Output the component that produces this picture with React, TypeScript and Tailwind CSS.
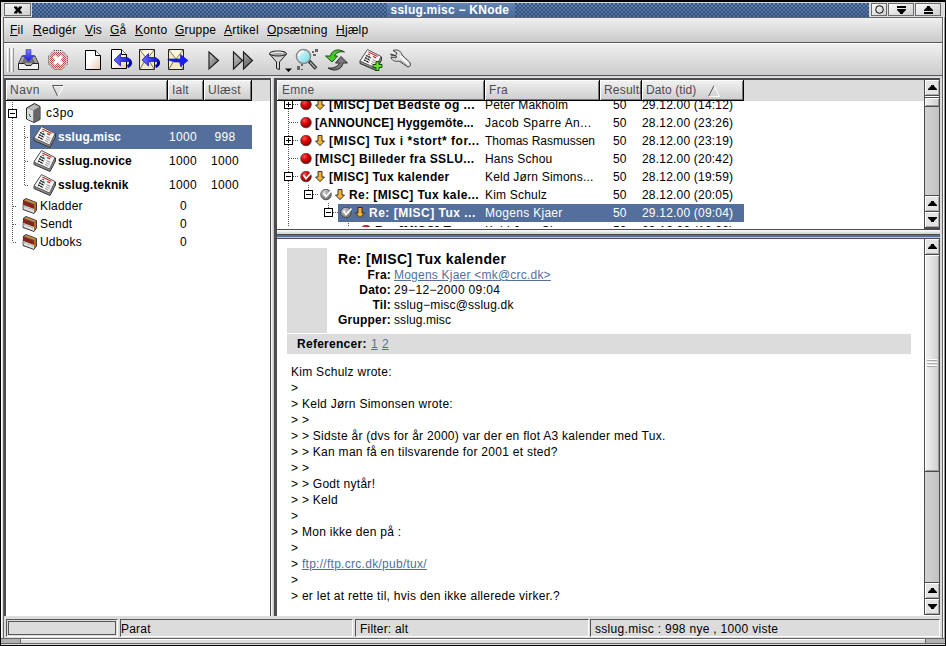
import type { ReactNode } from "react";

const menus: [string, string][] = [
  ["Fil", "w-[23px]"],
  ["Redigér", "w-[52px]"],
  ["Vis", "w-[25px]"],
  ["Gå", "w-[25px]"],
  ["Konto", "w-[40px]"],
  ["Gruppe", "w-[49px]"],
  ["Artikel", "w-[43px]"],
  ["Opsætning", "w-[69px]"],
  ["Hjælp", "w-[40px]"],
];

function Icon({ children, className = "" }: { children: ReactNode; className?: string }) {
  return (
    <svg viewBox="0 0 24 24" className={`h-6 w-6 shrink-0 overflow-visible ${className}`} fill="none">
      {children}
    </svg>
  );
}

function Page() {
  return (
    <>
      <path d="M3.500 2.500h10l5 5v14h-15z" fill="url(#paper)" stroke="#000" />
      <path d="M13.500 2.500v5h5" fill="#fff" stroke="#000" />
    </>
  );
}

function Envelope() {
  return (
    <>
      <path d="M2.500 1.500h15v20h-15z" fill="#f0e9cc" stroke="#222" />
      <path d="M3 2l7 9 7-9M3 21l6-10M17 21l-6-10" stroke="#77725c" />
      <path d="M4 2.500h12l-6 7.500z" fill="#fff8dd" />
    </>
  );
}

function BackArrow() {
  return (
    <g>
      <path d="M13 11.500h3.500c3 0 4.500 1.500 4 4c-.3 1.500-1.300 2.500-3 3" stroke="#0000a0" strokeWidth="3" />
      <path d="M4 12l6.500-6.500v4h6c2 0 3.500 1.500 3.500 4h-9.500v4.500z" fill="url(#blueSide)" stroke="#1a1ac8" strokeWidth=".8" />
    </g>
  );
}

function Newspaper({ plus = false }: { plus?: boolean }) {
  return (
    <Icon>
      <path d="M8.500 2L22.500 9v3L17 22.500L1 15.500v-2.500z" fill="#8a8a8a" stroke="#333" />
      <path d="M8.500 1.500L22 8.500L16.500 20L1 13z" fill="#f6f6f6" stroke="#555" strokeWidth=".9" />
      <path d="M9.500 4l9 4.500M9 6l2 1M14 8.500l3 1.400" stroke="#c43030" strokeWidth="1.200" />
      <path d="M7 7.500l5 2.400M6 9.700l5 2.400M5 11.900l5 2.400" stroke="#111" strokeWidth="1.300" strokeDasharray="2 .5" />
      <path d="M13.500 11.500l4 1.900M12.800 13.500l4 1.900M12 15.500l3.500 1.600" stroke="#888" strokeWidth=".9" />
      {plus && (
        <path d="M17 13.500h3v3h3v3h-3v3h-3v-3h-3v-3h3z" fill="#6de02c" stroke="#0d3c06" strokeWidth=".9" />
      )}
    </Icon>
  );
}

function Toolbar() {
  return (
    <div className="flex h-[33px] items-start border-b border-[#55555a] border-t border-t-white bg-linear-to-b from-[#f0f0f0] to-[#cccccc] pt-1">
      <div className="ml-[3px] flex h-6 w-[9px] gap-[1px]">
        <i className="w-px bg-white" />
        <i className="w-px bg-[#999]" />
        <i className="w-px bg-white" />
        <i className="w-px bg-[#999]" />
      </div>
      <Icon className="ml-px">
        <path d="M1.500 15.500l3.500-7.500h13l3.500 7.500v6h-20z" fill="#a5a5a5" stroke="#444" />
        <path d="M4.500 15l4-7h6l4 7z" fill="#6f6f6f" />
        <path d="M1.500 15.500h6l1.500 2h5l1.500-2h6v6h-20z" fill="#f0f0f0" stroke="#222" />
        <path d="M9 1.500h5v6h3.500l-6 6-6-6h3.500z" fill="url(#blue)" stroke="#3535b0" strokeWidth=".6" />
      </Icon>
      <Icon className="ml-[5px]">
        <path d="M8 2.500h8l5.500 5.500v8l-5.500 5.500h-8l-5.500-5.500v-8z" fill="#e2d2d2" stroke="#444" strokeDasharray="1 1" />
        <path d="M8 4h8l4.500 4.500v7l-4.500 5h-8l-4.500-5v-7z" fill="url(#redDots)" />
        <path d="M8 8l8 8m0-8l-8 8" stroke="#fff" strokeWidth="3.200" />
      </Icon>
      <Icon className="ml-3"><Page /></Icon>
      <Icon className="ml-1"><g transform="translate(-2 -1)"><Page /></g><BackArrow /></Icon>
      <Icon className="ml-1"><g transform="translate(-1 0)"><Envelope /></g><BackArrow /></Icon>
      <Icon className="ml-1">
        <Envelope />
        <path d="M2 11h12.500v-4.500l7.500 6-7.500 6v-4.500h-5.500l-7-2z" fill="#1a1aff" stroke="#0808c8" strokeWidth=".6" />
      </Icon>
      <Icon className="ml-3">
        <path d="M7 4l9.500 8.500L7 21z" fill="url(#gray)" stroke="#222" strokeWidth="1.200" />
      </Icon>
      <Icon className="ml-[5px]">
        <path d="M2.500 4l9 8.500-9 8.500zM12.500 4l9 8.500-9 8.500z" fill="url(#gray)" stroke="#222" strokeWidth="1.200" />
      </Icon>
      <Icon className="ml-[11px]">
        <path d="M3.500 6l7 8v6.500l3 1v-7.500l7-8z" fill="#d4d4d4" stroke="#222" />
        <ellipse cx="12" cy="5.500" rx="8.500" ry="2.500" fill="#aaa" stroke="#222" />
        <path d="M5 5.500c3-1.500 9-2 12-.5" stroke="#fff" />
        <path d="M19 20.500h7l-3.500 3.500z" fill="#000" />
      </Icon>
      <Icon className="ml-1">
        <path d="M15 13l7 7.500" stroke="#222" strokeWidth="3.500" />
        <path d="M16 14l5.500 6" stroke="#aaa" strokeWidth="1.500" />
        <circle cx="9.500" cy="8.500" r="7" fill="url(#glass)" stroke="#888" strokeWidth="1.500" />
        <path d="M4.500 8c.5-3 2.500-4.500 5-4.500" stroke="#fff" strokeWidth="2" />
        <path d="M18 3h2v2h-2zM21 1h3v3h-3zM19 6h3v2h-3zM3 18h3v4H3zM7 16h2v2H7zM7 21h2v1H7z" fill="#666" />
      </Icon>
      <Icon className="ml-1.5">
        <path d="M20.500 4c-6-4-13-2-14 4H1.500L8 14l5.500-6h-3c1-3 5-5 10-4z" fill="#45cb2b" stroke="#123c0c" strokeWidth=".9" />
        <path d="M4 20c6 4 14 2 15-5H23.500L17 8.500 11.500 15h4c-2 4-6 5.500-11.500 5z" fill="#777" stroke="#222" strokeWidth=".9" />
      </Icon>
      <div className="ml-[11px]"><Newspaper plus /></div>
      <Icon className="ml-[5px]">
        <path d="M2.500 6l5 1.500 1.500-2.500-4-2.500c4-1.500 8 0 9 4.500l7.500 7c2 2.500.5 6-2.500 4.500l-8-5.500c-4 1-7.500-.5-8-4l5 1 .500-2-5-.5z" fill="#e0e0e0" stroke="#333" strokeWidth=".9" />
        <path d="M12 8l8 7.500" stroke="#fff" strokeWidth="1.500" />
        <path d="M12 12.500l7 5" stroke="#888" />
      </Icon>
    </div>
  );
}

function Defs() {
  return (
    <svg className="absolute h-0 w-0">
      <defs>
        <linearGradient id="paper" x1="0" y1="0" x2="1" y2="1">
          <stop offset=".4" stopColor="#fff" />
          <stop offset="1" stopColor="#e8c8b0" />
        </linearGradient>
        <linearGradient id="blue" x1="0" y1="0" x2="0" y2="1">
          <stop stopColor="#8080ff" />
          <stop offset="1" stopColor="#1515e0" />
        </linearGradient>
        <linearGradient id="blueSide" x1="0" y1="0" x2="1" y2="0">
          <stop stopColor="#6c6cff" />
          <stop offset="1" stopColor="#1010d8" />
        </linearGradient>
        <linearGradient id="gray" x1="0" y1="0" x2="1" y2="1">
          <stop stopColor="#ccc" />
          <stop offset="1" stopColor="#555" />
        </linearGradient>
        <linearGradient id="glass" x1="0" y1="0" x2="1" y2="1">
          <stop stopColor="#e8ffff" />
          <stop offset="1" stopColor="#6fd3e4" />
        </linearGradient>
        <radialGradient id="redBall" cx=".35" cy=".3" r=".7">
          <stop stopColor="#ff5050" />
          <stop offset=".5" stopColor="#dd0000" />
          <stop offset="1" stopColor="#800000" />
        </radialGradient>
        <radialGradient id="grayBall" cx=".35" cy=".3" r=".7">
          <stop stopColor="#d0d0d0" />
          <stop offset="1" stopColor="#707070" />
        </radialGradient>
        <pattern id="redDots" width="2" height="2" patternUnits="userSpaceOnUse">
          <rect width="1" height="1" fill="#c05050" />
          <rect x="1" y="1" width="1" height="1" fill="#c05050" />
        </pattern>
      </defs>
    </svg>
  );
}

function HeaderCell({ children, className }: { children: ReactNode; className: string }) {
  return (
    <div className={`flex h-[21px] shrink-0 items-center overflow-hidden whitespace-nowrap border-b border-r border-black bg-linear-to-b from-[#f2f2f2] to-[#cdcdcd] pt-px text-[#4c4c50] shadow-[inset_1px_1px_0_#fff,inset_-1px_-1px_0_#77777a] ${className}`}>
      {children}
    </div>
  );
}

function Server() {
  return (
    <svg viewBox="0 0 16 20" className="h-5 w-4">
      <path d="M1.500 5l8-4.500 5.500 3v13l-6 3-7.500-3.500z" fill="#999" stroke="#222" />
      <path d="M2 5.500l6 2v11l-6-2.500z" fill="#dcdcdc" />
      <path d="M3 5l6.500-3.500 4.500 2L8.500 7z" fill="#bbb" />
      <path d="M8.500 7.500l6-3.500v12.500l-6 3z" fill="#666" />
      <path d="M4 11h1v2H4z" fill="#d22" />
      <path d="M5 13h1v1H5z" fill="#22d" />
    </svg>
  );
}

function Folder() {
  return (
    <svg viewBox="0 0 16 16" className="h-4 w-4">
      <path d="M1.500 2L4 .5l10.500 4V12L12 15.500 1 11.500z" fill="#555" stroke="#222" strokeWidth=".8" />
      <path d="M2 2.300L4 1l10 3.800L12.500 6z" fill="#d98a3a" />
      <path d="M1.500 3l10.500 4v4L1.500 7z" fill="#8a2418" />
      <path d="M1.500 7L12 11v4L1.500 11z" fill="#e4e4e4" />
      <path d="M12 6.500l2-1.700V12l-2 3z" fill="#b06a24" />
      <path d="M2 9l2-.5 2 2 2-.5 3.500 2.500" stroke="#aaa" fill="none" />
    </svg>
  );
}

function Expander({ x, y, plus = false }: { x: number; y: number; plus?: boolean }) {
  return (
    <g>
      <rect x={x + 0.5} y={y + 0.5} width="8" height="8" fill="#fff" stroke="#000" />
      <path d={`M${x + 2} ${y + 4.5}h5`} stroke="#000" />
      {plus && <path d={`M${x + 4.5} ${y + 2}v5`} stroke="#000" />}
    </g>
  );
}

const groups = [
  { name: "sslug.misc", unread: "998", selected: true, track: "" },
  { name: "sslug.novice", unread: "1000", track: "" },
  { name: "sslug.teknik", unread: "1000", track: "" },
];

function GroupTree() {
  return (
    <div className="flex w-[264px] shrink-0 flex-col bg-white">
      <div className="flex bg-[#dcdcdc]">
        <HeaderCell className="w-[162px] pl-1 tracking-[.5px]">
          Navn
          <svg viewBox="0 0 12 12" className="ml-[12px] h-3 w-3" fill="none">
            <path d="M.5 1h11L6 11.500" stroke="#fff" />
            <path d="M11 .5H.5L5.500 11" stroke="#55555a" />
          </svg>
        </HeaderCell>
        <HeaderCell className="w-[36px] pl-1 tracking-[.2px]">Ialt</HeaderCell>
        <HeaderCell className="w-[48px] pl-1 tracking-[.3px]">Ulæst</HeaderCell>
      </div>
      <div className="relative flex flex-col">
        <div className="flex h-6 items-center pl-[19px]">
          <Server />
          <span className="ml-[5px] pt-px tracking-[.5px]">c3po</span>
        </div>
        {groups.map((g) => (
          <div
            key={g.name}
            className={`ml-6 flex h-6 w-[222px] items-center pl-[3px] ${g.selected ? "bg-[#546f9b] text-white" : ""}`}
          >
            <div className="flex w-6"><Newspaper /></div>
            <span className="w-[104px] pl-px pt-px font-bold tracking-[.1px]">{g.name}</span>
            <span className="w-11 pt-px text-center tracking-[.3px]">1000</span>
            <span className="w-10 pt-px text-center tracking-[.3px]">{g.unread}</span>
          </div>
        ))}
        {["Kladder", "Sendt", "Udboks"].map((n) => (
          <div key={n} className="flex h-[18px] items-center pl-4">
            <Folder />
            <span className="w-[142px] pl-[2px] pt-px tracking-[.2px]">{n}</span>
            <span className="pt-px">0</span>
          </div>
        ))}
        <svg className="pointer-events-none absolute left-0 top-0 h-[150px] w-8" fill="none">
          <g stroke="#555" strokeDasharray="1 1">
            <path d="M6.500 1v139M7 105.500h4M7 123.500h4M7 141.500h4" />
            <path d="M18.500 25v60M19 36.500h4M19 60.500h4M19 84.500h4" />
          </g>
          <Expander x={2} y={8} />
        </svg>
      </div>
    </div>
  );
}

function Ball({ kind }: { kind: "red" | "redCheck" | "grayCheck" }) {
  return (
    <svg viewBox="0 0 12 12" className="h-3 w-3 shrink-0" fill="none">
      <circle cx="6" cy="5.500" r="5.300" fill={kind === "grayCheck" ? "url(#grayBall)" : "url(#redBall)"} stroke="#444" strokeWidth=".8" />
      {kind !== "red" && <path d="M3.500 4L6 7.500l5.500-6" stroke="#fff" strokeWidth="1.800" />}
    </svg>
  );
}

function DownArrow() {
  return (
    <svg viewBox="0 0 10 12" className="h-3 w-[10px] shrink-0">
      <path d="M3 .5h4v5.500h2.500L5 10.700.5 6h2.500z" fill="#f7b232" stroke="#222" strokeWidth=".9" />
    </svg>
  );
}

type Article = {
  subject: string;
  from: string;
  date: string;
  indent: string;
  cell: string;
  kind: "red" | "redCheck" | "grayCheck";
  track: string;
  fromTrack: string;
  arrow?: boolean;
  selected?: boolean;
};

const articles: Article[] = [
  { subject: "[MISC] Det Bedste og ...", from: "Peter Makholm", date: "29.12.00 (14:12)", indent: "ml-[23px]", cell: "w-[184px]", kind: "red", arrow: true, track: "tracking-[.44px]", fromTrack: "tracking-[.2px]" },
  { subject: "[ANNOUNCE] Hyggemöte...", from: "Jacob Sparre An...", date: "28.12.00 (23:26)", indent: "ml-[23px]", cell: "w-[184px]", kind: "red", track: "tracking-[.12px]", fromTrack: "tracking-[.43px]" },
  { subject: "[MISC] Tux i *stort* for...", from: "Thomas Rasmussen", date: "28.12.00 (23:19)", indent: "ml-[23px]", cell: "w-[184px]", kind: "red", arrow: true, track: "tracking-[.52px]", fromTrack: "tracking-[0px]" },
  { subject: "[MISC] Billeder fra SSLU...", from: "Hans Schou", date: "28.12.00 (20:42)", indent: "ml-[23px]", cell: "w-[184px]", kind: "red", track: "tracking-[.37px]", fromTrack: "tracking-[.2px]" },
  { subject: "[MISC] Tux kalender", from: "Keld Jørn Simons...", date: "28.12.00 (19:59)", indent: "ml-[23px]", cell: "w-[184px]", kind: "redCheck", arrow: true, track: "tracking-[.32px]", fromTrack: "tracking-[.2px]" },
  { subject: "Re: [MISC] Tux kale...", from: "Kim Schulz", date: "28.12.00 (20:05)", indent: "ml-[43px]", cell: "w-[164px]", kind: "grayCheck", arrow: true, track: "tracking-[.4px]", fromTrack: "tracking-[.2px]" },
  { subject: "Re: [MISC] Tux ...", from: "Mogens Kjaer", date: "29.12.00 (09:04)", indent: "ml-[61px]", cell: "w-[146px] pl-[2px]", kind: "grayCheck", arrow: true, selected: true, track: "tracking-[.5px]", fromTrack: "tracking-[.3px]" },
  { subject: "Re: [MISC] T...", from: "Keld Jørn Si...", date: "29.12.00 (10:22)", indent: "ml-[83px]", cell: "w-[124px]", kind: "red", track: "tracking-[.4px]", fromTrack: "tracking-[.2px]" },
];

function ScrollButton({ up = false, className = "" }: { up?: boolean; className?: string }) {
  return (
    <div className={`flex h-[15px] shrink-0 items-center justify-center bg-[#e4e4e4] shadow-[inset_1px_1px_0_#fff,inset_-1px_-1px_0_#aaa] ${className}`}>
      <svg viewBox="0 0 9 5" className="h-[5px] w-[9px]">
        <path d={up ? "M0 5V4l3-3V0h3v1l3 3v1z" : "M0 0v1l3 3v1h3V4l3-3V0z"} fill="#000" />
      </svg>
    </div>
  );
}

const thumb =
  "bg-linear-to-r from-[#f2f2f2] to-[#cfcfcf] shadow-[inset_1px_1px_0_#fff,inset_-1px_-1px_0_#999]";
const trough = "flex-1 bg-linear-to-r from-[#d2d2d2] to-[#c2c2c2]";

function ArticleList() {
  return (
    <div className="flex h-[149px]">
      <div className="flex min-w-0 flex-1 flex-col overflow-hidden bg-white">
        <div className="flex bg-[#dcdcdc]">
          <HeaderCell className="w-[208px] pl-[5px] tracking-[.3px]">Emne</HeaderCell>
          <HeaderCell className="w-[115px] pl-1 tracking-[.3px]">Fra</HeaderCell>
          <HeaderCell className="w-[42px] pl-1 tracking-[.2px]">Resulta</HeaderCell>
          <HeaderCell className="w-[102px] pl-1 tracking-[.1px]">
            Dato (tid)
            <svg viewBox="0 0 12 12" className="ml-[12px] h-3 w-3" fill="none">
              <path d="M.5 11.500L6 .5" stroke="#55555a" />
              <path d="M6 .5l5.500 11H.5" stroke="#fff" />
            </svg>
          </HeaderCell>
        </div>
        <div className="relative flex-1 overflow-hidden border-b-2 border-white">
          <div className="-mt-[5px] flex w-[467px] flex-col">
            {articles.map((a) => (
              <div key={a.subject} className={`flex h-[18px] shrink-0 items-center whitespace-nowrap ${a.selected ? "text-white" : ""}`}>
                <div className={`flex h-full items-center overflow-hidden ${a.indent} ${a.cell} ${a.selected ? "bg-[#546f9b]" : ""}`}>
                  <Ball kind={a.kind} />
                  {a.arrow && <span className="ml-[3px] mr-px flex"><DownArrow /></span>}
                  <span className={`ml-[3px] font-bold ${a.track}`}>{a.subject}</span>
                </div>
                <div className={`flex h-full flex-1 items-center ${a.selected ? "bg-[#546f9b]" : ""}`}>
                  <span className={`w-[115px] pl-px ${a.fromTrack}`}>{a.from}</span>
                  <span className="w-[43px] pl-[14px] tracking-[.2px]">50</span>
                  <span className="tracking-[.2px]">{a.date}</span>
                </div>
              </div>
            ))}
          </div>
          <svg className="pointer-events-none absolute left-0 top-0 h-[126px] w-24" fill="none">
            <g stroke="#555" strokeDasharray="1 1">
              <path d="M11.500 0v126M12 3.500h9M12 21.500h9M12 39.500h9M12 57.500h9M12 75.500h9" />
              <path d="M31.500 84v10M32 93.500h9M51.500 102v9M52 111.500h9M71.500 120v6" />
            </g>
            <Expander plus x={7} y={-1} />
            <Expander plus x={7} y={35} />
            <Expander x={7} y={71} />
            <Expander x={27} y={89} />
            <Expander x={47} y={107} />
          </svg>
        </div>
      </div>
      <div className="flex w-4 flex-col border-x border-[#4c4c50] bg-[#4c4c50]">
        <ScrollButton up />
        <div className={`mt-px h-px ${thumb}`} />
        <div className={`mt-px h-2 ${thumb}`} />
        <div className={`mt-px ${trough}`} />
        <ScrollButton up className="mt-px" />
        <ScrollButton className="mb-[2px] mt-px" />
      </div>
    </div>
  );
}

const fields: [string, string, string][] = [
  ["Fra:", "Mogens Kjaer <mk@crc.dk>", "tracking-[.22px] text-[#546f9b] underline"],
  ["Dato:", "29−12−2000 09:04", "tracking-[.35px]"],
  ["Til:", "sslug−misc@sslug.dk", "tracking-[.2px]"],
  ["Grupper:", "sslug.misc", "tracking-[.1px]"],
];

const lines = [
  "Kim Schulz wrote:",
  ">",
  "> Keld Jørn Simonsen wrote:",
  "> >",
  "> > Sidste år (dvs for år 2000) var der en flot A3 kalender med Tux.",
  "> > Kan man få en tilsvarende for 2001 et sted?",
  "> >",
  "> > Godt nytår!",
  "> > Keld",
  ">",
  "> Mon ikke den på :",
  ">",
  "ftp://ftp.crc.dk/pub/tux/",
  ">",
  "> er let at rette til, hvis den ikke allerede virker.?",
];

function ArticleView() {
  return (
    <div className="flex h-[376px]">
      <div className="flex min-w-0 flex-1 flex-col bg-white pl-[10px] pt-[9px]">
        <div className="flex h-[85px]">
          <div className="w-10 bg-[#dcdcdc]" />
          <div className="ml-[11px] flex flex-col pt-[3px]">
            <div className="h-[17px] text-[14px] font-bold leading-[17px] tracking-[.36px]">Re: [MISC] Tux kalender</div>
            {fields.map(([k, v, style]) => (
              <div key={k} className="flex h-[15px] items-center">
                <span className="flex w-[53px] justify-end whitespace-nowrap font-bold tracking-[.2px]">{k}</span>
                <span className={`ml-[3px] whitespace-nowrap ${style}`}>{v}</span>
              </div>
            ))}
          </div>
        </div>
        <div className="mt-px flex h-5 w-[624px] items-center bg-[#dcdcdc] pl-[10px]">
          <span className="w-[74px] font-bold tracking-[.27px]">Referencer:</span>
          <span className="w-[11px] text-[#546f9b] underline">1</span>
          <span className="text-[#546f9b] underline">2</span>
        </div>
        <div className="ml-1 mt-[10px] flex flex-col tracking-[.28px]">
          {lines.map((l, i) => (
            <div key={i} className="h-4 whitespace-pre leading-4">
              {l.startsWith("ftp") ? (
                <>
                  {"> "}
                  <span className="text-[#546f9b] underline">{l}</span>
                </>
              ) : (
                l
              )}
            </div>
          ))}
        </div>
      </div>
      <div className="flex w-4 flex-col border-x border-[#4c4c50] bg-[#4c4c50]">
        <ScrollButton up />
        <div className={`mt-px flex h-[216px] flex-col items-center justify-center gap-[2px] ${thumb}`}>
          <i className="h-px w-[10px] bg-[#aaa] shadow-[0_-1px_0_#fff]" />
          <i className="h-px w-[10px] bg-[#aaa] shadow-[0_-1px_0_#fff]" />
          <i className="h-px w-[10px] bg-[#aaa] shadow-[0_-1px_0_#fff]" />
        </div>
        <div className={`mt-px ${trough}`} />
        <ScrollButton up className="mt-px" />
        <ScrollButton className="my-px" />
      </div>
    </div>
  );
}

function TitleButton({ children, className }: { children: ReactNode; className: string }) {
  return (
    <div className={`flex h-[13px] items-center justify-center border border-[#6c6c70] bg-linear-to-br from-[#fafafa] to-[#cfcfcf] ${className}`}>
      {children}
    </div>
  );
}

const dots =
  "flex-1 bg-[radial-gradient(circle_at_1px_1px,#34507c_0.7px,transparent_0.8px),radial-gradient(circle_at_3px_3px,#34507c_0.7px,transparent_0.8px)] bg-[length:4px_4px]";

function TitleBar() {
  return (
    <div className="flex h-[15px] items-start pl-[3px] pt-px">
      <TitleButton className="w-[27px]">
        <svg viewBox="0 0 8 8" className="h-2 w-2">
          <path d="M0 .5h3l1 2 1-2h3v1L6 4l2 2.500v1H5l-1-2-1 2H0v-1L2 4 0 1.500z" />
        </svg>
      </TitleButton>
      <div className="ml-px flex h-[14px] w-[837px] bg-linear-to-b from-[#6285b5] to-[#4a6a98]">
        <div className={dots} />
        <span className="mx-[2px] w-[124px] whitespace-nowrap pl-[2px] pt-px font-bold leading-[13px] tracking-[.24px] text-white">
          sslug.misc − KNode
        </span>
        <div className={dots} />
      </div>
      <TitleButton className="ml-[2px] w-4">
        <svg viewBox="0 0 9 9" className="h-[9px] w-[9px]"><circle cx="4.500" cy="4.500" r="3.800" fill="none" stroke="#000" /></svg>
      </TitleButton>
      <TitleButton className="ml-px w-[26px]">
        <svg viewBox="0 0 9 8" className="h-2 w-[9px]"><path d="M0 0h9v2H0zM0 3h9v1L6 7v1H3V7L0 4z" /></svg>
      </TitleButton>
      <TitleButton className="ml-px w-[26px]">
        <svg viewBox="0 0 9 8" className="h-2 w-[9px]"><path d="M0 8h9V6H0zM0 5h9V4L6 1V0H3v1L0 4z" /></svg>
      </TitleButton>
    </div>
  );
}

const statusBox = "h-[18px] whitespace-nowrap border border-[#55555a] border-b-white border-r-white leading-[18px]";

export default function App() {
  return (
    <div className="flex h-[646px] w-[946px] flex-col overflow-hidden border border-t-2 border-black bg-[#dcdcdc] font-['Liberation_Sans',Arial,sans-serif] text-[12px] leading-[15px] text-black">
      <Defs />
      <TitleBar />
      <div className="flex h-[621px]">
        <div className="w-[2px] border-l border-white" />
        <div className="flex w-[939px] flex-col border-l border-t border-[#66666a]">
          <div className="flex h-[25px] items-center border-b border-[#55555a] bg-linear-to-b from-[#f0f0f0] to-[#cacaca] pl-[6px] tracking-[.2px]">
            {menus.map(([m, w]) => (
              <span key={m} className={`whitespace-nowrap ${w}`}>
                <span className="underline">{m[0]}</span>
                {m.slice(1)}
              </span>
            ))}
          </div>
          <Toolbar />
          <div className="mt-[2px] flex h-[538px]">
            <div className="flex border-l-2 border-t-2 border-[#4c4c50]">
              <GroupTree />
            </div>
            <div className="flex w-[5px] border-x border-[#4c4c50] bg-linear-to-r from-white to-[#c0c0c0]" />
            <div className="flex w-[665px] flex-col border-l-2 border-t-2 border-[#4c4c50] bg-white">
              <ArticleList />
              <div className="flex h-[10px] flex-col border-y border-[#4c4c50] bg-[#c8c8c8]">
                <div className="h-1 bg-linear-to-b from-white to-[#cfcfcf]" />
                <div className="h-[3px] border-t border-[#4c4c50] bg-[#546f9b]" />
              </div>
              <ArticleView />
            </div>
          </div>
          <div className="mt-[3px] flex h-[18px] pl-[2px]">
            <div className={`w-[112px] p-px ${statusBox}`}>
              <div className="h-[14px] border border-[#55555a]" />
            </div>
            <div className={`ml-[2px] w-[233px] tracking-[.2px] ${statusBox}`}>Parat</div>
            <div className={`ml-[2px] w-[234px] pl-1 tracking-[.2px] ${statusBox}`}>Filter: alt</div>
            <div className={`ml-px w-[350px] pl-1 tracking-[.3px] ${statusBox}`}>sslug.misc : 998 nye , 1000 viste</div>
          </div>
        </div>
        <div className="flex w-[3px]">
          <i className="w-px bg-[#66666a]" />
          <i className="w-px bg-white" />
          <i className="w-px bg-[#99999c]" />
        </div>
      </div>
      <div className="flex h-[6px] border-b border-t border-[#66666a]">
        <div className="w-5 border-r border-[#66666a] bg-[#b0b0b0]" />
        <div className="flex-1 border-t border-white" />
        <div className="w-5 border-l border-[#66666a] bg-[#b0b0b0]" />
      </div>
    </div>
  );
}
